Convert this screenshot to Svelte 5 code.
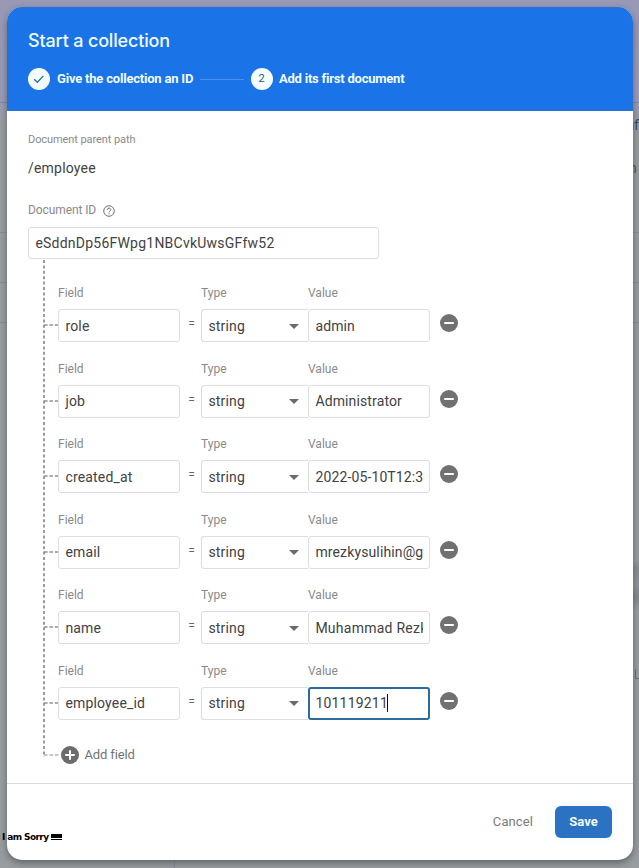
<script>
  const fields = [
    { name: 'role', value: 'admin' },
    { name: 'job', value: 'Administrator' },
    { name: 'created_at', value: '2022-05-10T12:3' },
    { name: 'email', value: 'mrezkysulihin@g' },
    { name: 'name', value: 'Muhammad Rezk', cut: true },
    { name: 'employee_id', value: '101119211', focused: true }
  ];
</script>

<div class="screen">
  <i class="rule a"></i><i class="rule b"></i><i class="rule c"></i><i class="rule d"></i>
  <i class="rule v"></i>
  <i class="smudge"></i>
  <span class="behind p1">nf</span>
  <span class="behind p2">n</span>
  <i class="corner"></i>

  <div class="dialog">
    <header>
      <h1>Start a collection</h1>
      <div class="steps">
        <span class="dot">
          <svg width="22" height="22" viewBox="0 0 22 22"><path d="M6.2 11.2l3.2 3.1 6-6.4" fill="none" stroke="#356a94" stroke-width="1.3" /></svg>
        </span>
        <b class="s1">Give the collection an ID</b>
        <i class="line"></i>
        <span class="dot two">2</span>
        <b class="s2">Add its first document</b>
      </div>
    </header>

    <main>
      <div class="label path">Document parent path</div>
      <div class="employee">/employee</div>
      <div class="label docid">
        <span>Document ID</span>
        <svg width="12" height="12" viewBox="0 0 12 12" fill="none" stroke="#6b6b6b">
          <circle cx="6" cy="6" r="5.3" stroke-width=".95" />
          <path d="M4.3 4.8C4.3 2.5 7.8 2.6 7.8 4.7C7.8 6 6 6.1 6 7.4M6 8.3v1.1" stroke-width="1" />
        </svg>
      </div>
      <div class="box id">eSddnDp56FWpg1NBCvkUwsGFfw52</div>

      <div class="tree">
        <svg class="trunk" width="2" height="498" viewBox="0 0 2 498"><path d="M1 0v497" stroke="#8a8a8a" stroke-width="1.7" stroke-dasharray="3 2.4" /></svg>
        {#each fields as f}
          <div class="row">
            <svg class="branch" width="14" height="2" viewBox="0 0 14 2"><path d="M0 1h14" stroke="#929292" stroke-width="1.4" stroke-dasharray="3.6 1.8" /></svg>
            <div class="col field">
              <span class="label">Field</span>
              <div class="box">{f.name}</div>
            </div>
            <span class="eq">=</span>
            <div class="col type">
              <span class="label">Type</span>
              <div class="box">string<i class="caret"></i></div>
            </div>
            <div class="col value">
              <span class="label">Value</span>
              <div class="box" class:focused={f.focused} class:cut={f.cut}>
                <span class="clip">{f.value}{#if f.focused}<i class="cursor"></i>{/if}</span>
              </div>
            </div>
            <svg class="minus" width="18" height="18" viewBox="0 0 18 18"><circle cx="9" cy="9" r="9" fill="#717171" /><path d="M4.2 9h9.6" stroke="#fff" stroke-width="2" /></svg>
          </div>
        {/each}
        <div class="add">
          <svg class="branch" width="15" height="2" viewBox="0 0 15 2"><path d="M0 1h15" stroke="#929292" stroke-width="1.2" stroke-dasharray="3.6 1.8" /></svg>
          <svg class="plus" width="18" height="18" viewBox="0 0 18 18"><circle cx="9" cy="9" r="9" fill="#6c6c6c" /><path d="M4.2 9h9.6M9 4.2v9.6" stroke="#fff" stroke-width="2" /></svg>
          <span>Add field</span>
        </div>
      </div>
    </main>

    <footer>
      <span class="cancel">Cancel</span>
      <span class="save">Save</span>
    </footer>
  </div>
  <div class="sorry">I am Sorry <i></i></div>
</div>

<style>
  .screen {
    position: relative;
    width: 639px;
    height: 868px;
    box-sizing: border-box;
    padding: 7px 6px 8px 7px;
    overflow: hidden;
    background: linear-gradient(#9999b5 0, #9a9cba 95px, #999da0 125px, #999da0 100%);
    font-family: Roboto, 'Liberation Sans', sans-serif;
    color: #424242;
    white-space: nowrap;
  }
  i { display: block; }
  .rule { position: absolute; left: 0; width: 639px; height: 1px; background: #8a8d94; }
  .a { top: 102px; background: #8585a5; }
  .b { top: 232px; }
  .c { top: 282px; }
  .d { top: 322px; }
  .v { left: 174px; top: 860px; width: 1px; height: 8px; }
  .smudge {
    position: absolute;
    left: 632px;
    top: 560px;
    width: 7px;
    height: 50px;
    background: linear-gradient(#999da0, #898d90 16%, #91959a 50%, #84888b 74%, #999da0);
  }
  .behind { position: absolute; color: #34466b; font-size: 14px; line-height: 16px; }
  .p1 { right: 0; top: 117px; }
  .p2 { left: 629px; top: 160px; color: #4c525f; }
  .corner { position: absolute; left: 635px; top: 669px; width: 5px; height: 9px; border-left: 1px solid #6d7073; border-bottom: 1px solid #6d7073; }
  .dialog {
    position: relative;
    height: 853px;
    border-radius: 15px;
    overflow: hidden;
    background: #fff;
    box-shadow: 0 3px 7px rgba(40, 45, 50, .5);
    display: flex;
    flex-direction: column;
  }
  header {
    height: 104px;
    box-sizing: border-box;
    padding: 22px 0 0 21px;
    background: #1b73e8;
    box-shadow: inset 0 0 3px #3b70b5;
    color: #eefcff;
  }
  h1 {
    margin: 0;
    font: 500 18px/24px Inter, sans-serif;
    letter-spacing: -.17px;
  }
  .steps { display: flex; align-items: center; height: 22px; margin-top: 15px; font-size: 13px; }
  .dot {
    flex: none;
    width: 22px;
    height: 22px;
    border-radius: 50%;
    background: #f3fdff;
    color: #285b85;
    font-size: 11px;
    line-height: 22px;
    text-align: center;
  }
  .dot svg { display: block; }
  b { font-weight: 700; margin-top: -2px; }
  .s1 { width: 143px; margin-left: 7px; letter-spacing: -.2px; }
  .line { width: 44px; height: 1px; background: #4c91ed; margin-right: 6.5px; }
  .s2 { margin-left: 6.5px; letter-spacing: -.22px; }
  main { height: 672px; padding-left: 21px; box-sizing: border-box; }
  .label { display: block; color: #8a8a8a; font-size: 12px; line-height: 14px; }
  .path { margin-top: 22px; font-size: 11px; letter-spacing: -.08px; }
  .employee { margin-top: 12px; font-size: 14px; line-height: 18px; letter-spacing: .2px; }
  .docid { display: flex; align-items: center; gap: 7px; margin-top: 26px; height: 14px; letter-spacing: -.1px; }
  .docid svg { margin-top: 2px; }
  .box {
    display: flex;
    align-items: center;
    box-sizing: border-box;
    height: 33px;
    border: 1px solid #dedede;
    border-radius: 3px;
    padding-left: 6.4px;
    font-size: 14px;
    letter-spacing: .17px;
    background: #fff;
  }
  .box.id { width: 351px; height: 32px; margin-top: 10px; letter-spacing: .23px; }
  .tree { position: relative; margin-left: 15px; padding-top: 27px; }
  .trunk { position: absolute; left: 0; top: 1px; }
  .row { display: flex; align-items: flex-start; height: 75.6px; }
  .branch { flex: none; margin-left: 1px; }
  .row .branch { margin-top: 38px; }
  .col .label { margin-bottom: 9px; }
  .field { width: 122px; }
  .eq { width: 21px; padding-left: 2px; box-sizing: border-box; margin-top: 31px; text-align: center; font-size: 12px; line-height: 14px; color: #666; }
  .type { width: 107px; }
  .type .box { border-radius: 3px 0 0 3px; border-right: 0; padding-right: 9px; justify-content: space-between; }
  .caret { border: 5px solid transparent; border-top: 5px solid #6b6b6b; border-bottom: 0; margin-top: 1px; }
  .value { width: 122px; }
  .value .box { padding-right: 4.6px; letter-spacing: .13px; }
  .clip { flex: 1; display: flex; align-items: center; overflow: hidden; line-height: 20px; }
  .value .box.cut { padding-right: 6px; letter-spacing: .25px; }
  .value .box.focused { border: 2px solid #2e6b9d; padding-left: 5.4px; padding-right: 4px; letter-spacing: .2px; }
  .cursor { width: 1px; height: 18px; background: #111; margin-left: -1px; }
  .minus { margin: 28px 0 0 9.5px; }
  .add { display: flex; align-items: center; height: 18px; margin-top: 6px; }
  .add .plus { margin-left: 2px; }
  .add span { margin-left: 5.5px; color: #757575; font-size: 13px; letter-spacing: -.15px; }
  footer {
    flex: 1;
    box-sizing: border-box;
    border-top: 1px solid #dadada;
    display: flex;
    align-items: flex-start;
    justify-content: flex-end;
    padding: 22px 21px 0 0;
    font-size: 13px;
    line-height: 32px;
  }
  .cancel { color: #7c7c7c; margin-right: 22px; letter-spacing: .1px; }
  .save {
    width: 57px;
    height: 32px;
    border-radius: 6px;
    background: #2b72c2;
    color: #f2fbff;
    font-weight: 700;
    text-align: center;
    box-shadow: 0 0 8px 2px #effcfd;
  }
  .sorry {
    position: absolute;
    left: 2px;
    top: 831px;
    display: flex;
    align-items: center;
    color: #000;
    font: bold 9px/12px 'DejaVu Sans', sans-serif;
    letter-spacing: -.6px;
  }
  .sorry i { width: 11px; height: 4px; border-bottom: 1px solid #000; margin-left: 3px; background: linear-gradient(#000 4px, #fff 0); padding-bottom: 1px; }
</style>
